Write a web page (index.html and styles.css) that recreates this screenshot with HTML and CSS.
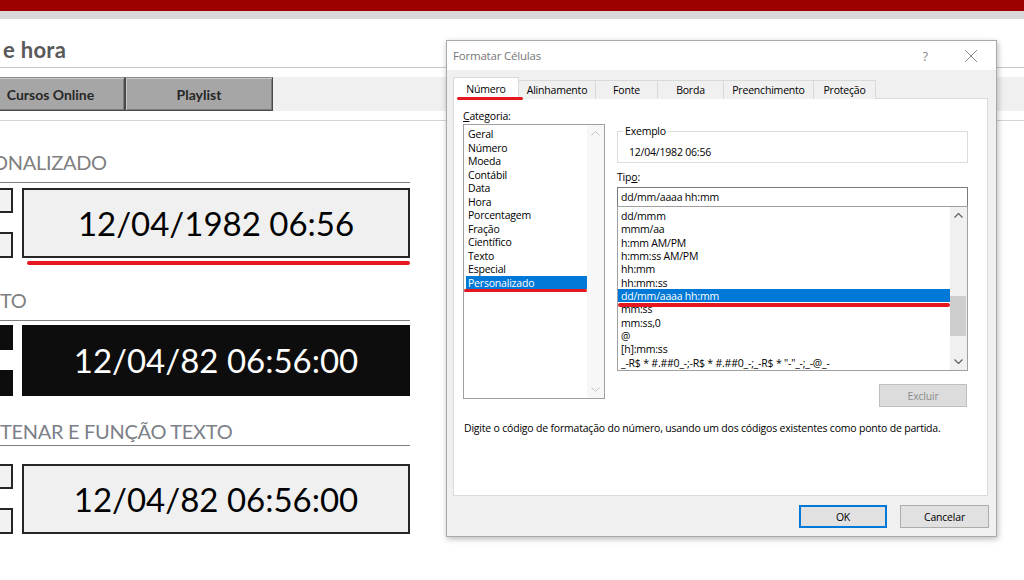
FILE: index.html
```html
<!DOCTYPE html>
<html lang="pt">
<head>
<meta charset="utf-8">
<title>Formatar Células</title>
<link rel="stylesheet" href="styles.css">
</head>
<body>
<div class="sheet">
  <div class="redbar"></div>
  <div class="grayband"></div>
  <div class="titlerow"><h1 class="title">e hora</h1></div>
  <nav class="navbar">
    <div class="navbtn nb1">Cursos Online</div>
    <div class="navbtn">Playlist</div>
  </nav>
  <div class="rule"></div>

  <section class="block b1">
    <h2 class="sec">ONALIZADO</h2>
    <div class="cells">
      <div class="minis"><div class="mini"></div><div class="mini"></div></div>
      <div class="bigbox">12/04/1982 06:56</div>
    </div>
    <div class="redline"></div>
  </section>

  <section class="block b2">
    <h2 class="sec">TO</h2>
    <div class="cells dark">
      <div class="minis"><div class="mini"></div><div class="mini"></div></div>
      <div class="bigbox">12/04/82 06:56:00</div>
    </div>
  </section>

  <section class="block b3">
    <h2 class="sec">TENAR E FUNÇÃO TEXTO</h2>
    <div class="cells">
      <div class="minis"><div class="mini"></div><div class="mini"></div></div>
      <div class="bigbox">12/04/82 06:56:00</div>
    </div>
  </section>
</div>

<div class="dialog">
  <div class="dtitle">
    <span class="ttl">Formatar Células</span>
    <span class="help">?</span>
    <svg class="close" width="14" height="14" viewBox="0 0 14 14"><path d="M1 1 L13 13 M13 1 L1 13" stroke="#8a8a8a" stroke-width="1" fill="none"/></svg>
  </div>
  <div class="dbody">
    <div class="tabs">
      <div class="tab active t1">Número<span class="mark"></span></div>
      <div class="tab t2">Alinhamento</div>
      <div class="tab t3">Fonte</div>
      <div class="tab t4">Borda</div>
      <div class="tab t5">Preenchimento</div>
      <div class="tab t6">Proteção</div>
    </div>
    <div class="panel">
      <div class="cols">
        <div class="lcol">
          <div class="lbl"><u>C</u>ategoria:</div>
          <div class="listbox catlist">
            <ul class="items">
              <li>Geral</li>
              <li>Número</li>
              <li>Moeda</li>
              <li>Contábil</li>
              <li>Data</li>
              <li>Hora</li>
              <li>Porcentagem</li>
              <li>Fração</li>
              <li>Científico</li>
              <li>Texto</li>
              <li>Especial</li>
              <li class="sel">Personalizado<span class="mark"></span></li>
            </ul>
            <div class="sbar light">
              <div class="arrow"><svg width="9" height="5" viewBox="0 0 9 5"><polyline points="0.5,4.5 4.5,0.5 8.5,4.5" fill="none" stroke="#c4c4c4" stroke-width="1"/></svg></div>
              <div class="track"></div>
              <div class="arrow"><svg width="9" height="5" viewBox="0 0 9 5"><polyline points="0.5,0.5 4.5,4.5 8.5,0.5" fill="none" stroke="#c4c4c4" stroke-width="1"/></svg></div>
            </div>
          </div>
        </div>
        <div class="rcol">
          <fieldset class="group">
            <legend>Exemplo</legend>
            <div class="sample">12/04/1982 06:56</div>
          </fieldset>
          <div class="lbl tipo">Tip<u>o</u>:</div>
          <div class="input">dd/mm/aaaa hh:mm</div>
          <div class="listbox typelist">
            <ul class="items">
              <li>dd/mmm</li>
              <li>mmm/aa</li>
              <li>h:mm AM/PM</li>
              <li>h:mm:ss AM/PM</li>
              <li>hh:mm</li>
              <li>hh:mm:ss</li>
              <li class="sel">dd/mm/aaaa hh:mm<span class="mark"></span></li>
              <li>mm:ss</li>
              <li>mm:ss,0</li>
              <li>@</li>
              <li>[h]:mm:ss</li>
              <li>_-R$ * #.##0_-;-R$ * #.##0_-;_-R$ * "-"_-;_-@_-</li>
            </ul>
            <div class="sbar">
              <div class="arrow"><svg width="9" height="5" viewBox="0 0 9 5"><polyline points="0.5,4.5 4.5,0.5 8.5,4.5" fill="none" stroke="#606060" stroke-width="1.2"/></svg></div>
              <div class="track"><div class="thumb"></div></div>
              <div class="arrow"><svg width="9" height="5" viewBox="0 0 9 5"><polyline points="0.5,0.5 4.5,4.5 8.5,0.5" fill="none" stroke="#606060" stroke-width="1.2"/></svg></div>
            </div>
          </div>
          <div class="btn disabled excluir">Excluir</div>
        </div>
      </div>
      <p class="desc">Digite o código de formatação do número, usando um dos códigos existentes como ponto de partida.</p>
    </div>
    <div class="footer">
      <div class="btn ok">OK</div>
      <div class="btn">Cancelar</div>
    </div>
  </div>
</div>
</body>
</html>
```
FILE: styles.css
```css
* { box-sizing: border-box; margin: 0; padding: 0; }
html, body { width: 1024px; height: 580px; overflow: hidden; background: #fff; }
body { position: relative; font-family: Lato, "Liberation Sans", sans-serif; color: #000; }

/* ---------- spreadsheet background ---------- */
.redbar { height: 11px; background: #9e0000; }
.grayband { height: 8px; background: #d9d9d9; }
.titlerow { height: 49px; border-bottom: 1px solid #c8c8c8; padding-top: 19px; }
.title { font-size: 22px; line-height: 24px; font-weight: 700; color: #595959; padding-left: 3px; letter-spacing: 0.3px; }

.navbar { margin-top: 9px; height: 34px; background: #f0f0f0; display: flex; }
.navbtn {
  width: 148px; height: 34px; background: #a6a6a6;
  border: 1px solid #4a4a4a; border-top-color: #8c8c8c;
  box-shadow: inset 1px 1px 0 #c6c6c6, inset -1px -1px 0 #7c7c7c;
  font-size: 14px; font-weight: 700; color: #262626;
  display: flex; align-items: center; justify-content: center;
}
.nb1 { margin-left: -24px; width: 149px; }
.rule { margin-top: 9px; height: 1px; background: #d4d4d4; }

.block { width: 410px; }
.sec {
  font-size: 20px; line-height: 24px; font-weight: 400; color: #7f7f7f; letter-spacing: -0.3px;
  border-bottom: 1px solid #7f7f7f; white-space: nowrap; overflow: hidden;
}
.b1 .sec { margin-top: 29px; padding-bottom: 8px; text-indent: -8px; }
.b2 .sec { margin-top: 23px; padding-bottom: 8px; }
.b3 .sec { margin-top: 23px; padding-bottom: 2px; color: #7c8088; }

.cells { display: flex; gap: 9px; height: 70px; margin-top: 5px; }
.b2 .cells { margin-top: 4px; height: 71px; }
.b3 .cells { margin-top: 18px; }
.minis { width: 13px; display: flex; flex-direction: column; justify-content: space-between; }
.mini { height: 25px; border: 2px solid #262626; border-left: none; background: #f2f2f2; }
.minis .mini:last-child { height: 26px; }
.bigbox {
  flex: 1; background: #f0f0f0; border: 2px solid #262626;
  font-size: 33px; line-height: 66px; text-align: center; color: #000;
}
.dark .mini { background: #0d0d0d; border-color: #0d0d0d; }
.dark .bigbox { background: #0d0d0d; border-color: #0d0d0d; color: #fff; }
.redline { margin: 3px 0 0 27px; width: 383px; height: 4px; border-radius: 2px; background: #e3191f; }

/* ---------- dialog ---------- */
.dialog {
  position: absolute; left: 446px; top: 40px; width: 551px; height: 497px;
  background: #f0f0f0; border: 1px solid #a9a9a9;
  box-shadow: 1px 2px 6px rgba(0,0,0,0.28);
  font-family: "Open Sans", "Noto Sans", sans-serif; font-size: 10.5px; letter-spacing: -0.2px; color: #000;
  display: flex; flex-direction: column;
}
.dtitle { height: 29px; background: #fff; display: flex; align-items: center; padding-left: 6px; color: #777; font-size: 11.5px; }
.dtitle .ttl { flex: 1; }
.help { font-size: 13px; color: #8a8a8a; margin-right: 36px; }
.close { margin-right: 18px; }

.dbody { flex: 1; padding: 7px 8px 0 6px; }
.tabs { display: flex; align-items: flex-end; height: 22px; }
.tab {
  position: relative; height: 19px; border: 1px solid #d9d9d9; border-bottom: none;
  margin-left: -1px; text-align: center; line-height: 19px; background: #f0f0f0;
}
.tab.active { height: 22px; background: #fff; margin-left: 0; line-height: 22px; z-index: 1; }
.t1 { width: 66px; } .t2 { width: 78px; } .t3 { width: 63px; } .t4 { width: 67px; } .t5 { width: 91px; } .t6 { width: 63px; }
.mark { position: absolute; left: 0; right: 0; top: 100%; height: 3px; border-radius: 2px; background: #e3191f; }
.tab .mark { left: 3px; right: -5px; top: 19px; }

.panel { height: 398px; background: #fff; border: 1px solid #dadada; padding: 10px 18px 0 9px; margin-top: -1px; }
.cols { display: grid; grid-template-columns: 142px 351px; column-gap: 12px; }
.lbl { line-height: 15px; }
.listbox { display: flex; border: 1px solid #a0a0a0; background: #fff; }
.catlist { margin-top: 0; height: 275px; }
.items { list-style: none; flex: 1; padding-top: 2px; overflow: hidden; }
.catlist .items { padding-left: 2px; }
.catlist li { line-height: 12.5px; padding: 1px 0 0 2px; white-space: nowrap; position: relative; }
.typelist li { line-height: 12.35px; padding: 1px 0 0 3px; white-space: nowrap; position: relative; }
li.sel { background: #0078d7; color: #fff; }
.catlist li.sel .mark { left: -2px; right: 0; top: 13px; }
.typelist li.sel .mark { top: 14px; height: 4px; }

.sbar { width: 17px; display: flex; flex-direction: column; background: #f0f0f0; }
.sbar.light { background: #f7f7f7; }
.sbar .arrow { height: 17px; display: flex; align-items: center; justify-content: center; }
.sbar .track { flex: 1; }
.thumb { margin-top: 72px; height: 40px; margin-right: 1px; background: #cdcdcd; }

.group { margin-top: 15px; border: 1px solid #dcdcdc; padding: 7px 0 3px 5px; }
.group legend { padding: 0 2px; line-height: 14px; }
.sample { padding-left: 6px; line-height: 14px; }
.tipo { margin-top: 7px; line-height: 14px; }
.input { margin-top: 3px; height: 20px; border: 1px solid #7a7a7a; padding-left: 3px; line-height: 19px; }
.typelist { margin-top: -1px; height: 165px; border-color: #a0a0a0; }

.btn {
  height: 23px; width: 89px; background: #e1e1e1; border: 1px solid #adadad;
  display: flex; align-items: center; justify-content: center; padding-top: 1px;
}
.excluir { margin: 13px 1px 0 auto; width: 88px; }
.btn.disabled { background: #dcdcdc; border-color: #bfbfbf; color: #8c8c8c; }
.desc { margin-top: 14px; padding-left: 1px; line-height: 15px; white-space: nowrap; }
.footer { margin-top: 9px; margin-right: -1px; display: flex; justify-content: flex-end; gap: 13px; }
.btn.ok { width: 88px; border: 2px solid #0078d7; }
```
